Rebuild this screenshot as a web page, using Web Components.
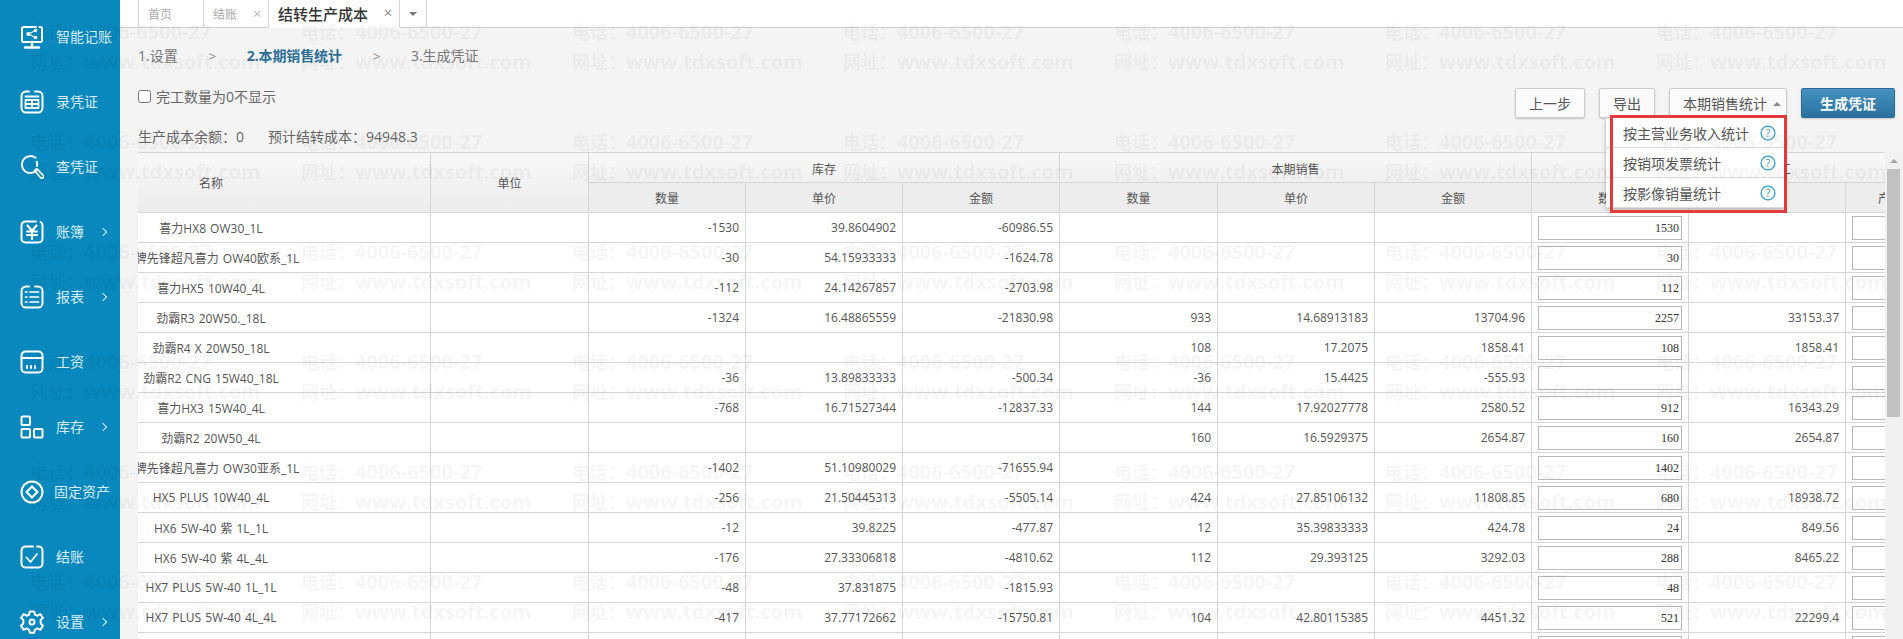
<!DOCTYPE html>
<html lang="zh-CN"><head><meta charset="utf-8"><title>结转生产成本</title>
<style>
html,body{margin:0;height:100%;overflow:hidden;background:#f4f4f4}
body{font-family:"Open Sans","Noto Sans CJK SC",sans-serif;color:#666;font-size:14px}
</style></head>
<body>
<app-shell>
  <app-sidebar slot="side">
    <nav-item icon="monitor">智能记账</nav-item>
    <nav-item icon="voucher">录凭证</nav-item>
    <nav-item icon="search">查凭证</nav-item>
    <nav-item icon="yen" arrow>账簿</nav-item>
    <nav-item icon="report" arrow>报表</nav-item>
    <nav-item icon="salary">工资</nav-item>
    <nav-item icon="stock" arrow>库存</nav-item>
    <nav-item icon="asset" tight>固定资产</nav-item>
    <nav-item icon="check">结账</nav-item>
    <nav-item icon="gear" arrow>设置</nav-item>
  </app-sidebar>
  <tab-bar>
    <tab-item first>首页</tab-item>
    <tab-item closable>结账</tab-item>
    <tab-item closable active>结转生产成本</tab-item>
    <tab-more></tab-more>
  </tab-bar>
  <step-nav>
    <step-item>1.设置</step-item><step-sep></step-sep>
    <step-item active>2.本期销售统计</step-item><step-sep></step-sep>
    <step-item>3.生成凭证</step-item>
  </step-nav>
  <tool-row>
    <filter-info></filter-info>
    <ui-btn slot="actions" style="width:70px">上一步</ui-btn>
    <ui-btn slot="actions" style="width:56px">导出</ui-btn>
    <stat-dropdown slot="actions"></stat-dropdown>
    <ui-btn slot="actions" primary style="width:94px">生成凭证</ui-btn>
  </tool-row>
  <table-pane>
    <data-table></data-table>
    <scroll-rail slot="rail"></scroll-rail>
  </table-pane>
</app-shell>
<water-mark></water-mark>
<script>
function def(name, css, html, init){
  customElements.define(name, class extends HTMLElement{
    constructor(){super();const s=this.attachShadow({mode:'open'});
      s.innerHTML='<style>'+css+'</style>'+(typeof html==='function'?html(this):html);}
    connectedCallback(){ if(init) init(this,this.shadowRoot); }
  });
}
const ICONS={
monitor:'<path d="M16 2H3.5A1.5 1.5 0 0 0 2 3.500V15.500A1.500 1.500 0 0 0 3.500 17H20.500A1.500 1.500 0 0 0 22 15.500V3.500A1.500 1.500 0 0 0 20.500 2H19.500"/><path d="M12 17V22M5 22.500H19" stroke-width="2.400"/><path d="M15.500 5.500L8.500 9L15.500 12.500" stroke-width="1.200"/><circle cx="8.300" cy="9" r="2" fill="#fff" stroke="none"/><circle cx="15.500" cy="5.500" r="1.800" fill="#fff" stroke="none"/><circle cx="15.500" cy="12.500" r="1.800" fill="#fff" stroke="none"/>',
voucher:'<path d="M9 1.500H6A4.500 4.500 0 0 0 1.500 6V18A4.500 4.500 0 0 0 6 22.500H18A4.500 4.500 0 0 0 22.500 18V6A4.500 4.500 0 0 0 18 1.500H15"/><path d="M5.500 6.500H18.500M5.500 10V18H18.500V10ZM5.500 14H18.500M12 10V18" stroke-width="1.800"/>',
search:'<path d="M15.500 2.800A8.500 8.500 0 1 0 16.500 15.500"/><path d="M16.800 6.800A8.500 8.500 0 0 1 17 11"/><path d="M14.500 15.500L17 13.800L23.300 20.500A1.800 1.800 0 0 1 20.800 23Z" stroke-width="1.700"/>',
yen:'<path d="M16 1.500H5.500A4 4 0 0 0 1.500 5.500V18.500A4 4 0 0 0 5.500 22.500H18.500A4 4 0 0 0 22.500 18.500V5.500A4 4 0 0 0 20.500 2"/><path d="M7.500 5.500L12 11L16.500 5.500M12 11V19M7 11.500H17M7 15H17" stroke-width="2.200"/>',
report:'<path d="M9 1.500H6A4.500 4.500 0 0 0 1.500 6V18A4.500 4.500 0 0 0 6 22.500H18A4.500 4.500 0 0 0 22.500 18V6A4.500 4.500 0 0 0 18 1.500H15"/><path d="M10 7H18.500M10 12H18.500M10 17H18.500" stroke-width="1.700"/><path d="M5.500 7H7M5.500 12H7M5.500 17H7" stroke-width="1.700"/>',
salary:'<path d="M1.500 8V18.500A4 4 0 0 0 5.500 22.500H18.500A4 4 0 0 0 22.500 18.500V8Z"/><path d="M1.500 8V5.500A4 4 0 0 1 5.500 1.500H18.500A4 4 0 0 1 22.500 5.500V8"/><path d="M7 16V18M11 16V18M15 16V18" stroke-width="2"/>',
stock:'<rect x="1.500" y="1.500" width="8.500" height="8.500" rx="1"/><rect x="1.500" y="14" width="8.500" height="8.500" rx="1"/><rect x="14" y="14" width="8.500" height="8.500" rx="1"/>',
asset:'<circle cx="12" cy="12" r="10.500"/><path d="M12 6.500L17.500 12L12 17.500L6.500 12Z" stroke-width="2.200"/>',
check:'<path d="M13 1.500H5.500A4 4 0 0 0 1.500 5.500V18.500A4 4 0 0 0 5.500 22.500H18.500A4 4 0 0 0 22.500 18.500V5.500A4 4 0 0 0 18.500 1.500H17"/><path d="M6.500 12.500L10.500 17L17 9" stroke-width="1.700"/>',
gear:'<path d="M9.800 1.500H14.200L15 4.700L17.600 5.700L20.300 4L23 7.800L20.600 10L20.700 13.500L23 15.800L20.400 19.800L17.400 18.400L15 19.600L14.200 22.800H9.800L9 19.600L6.600 18.400L3.600 19.800L1 15.800L3.300 13.500L3.400 10L1 7.800L3.700 4L6.400 5.700L9 4.700Z" stroke-linejoin="round"/><circle cx="12" cy="12" r="2.500"/>'
};
def('app-shell',':host{display:flex;height:639px;width:1903px}main{flex:1;min-width:0;display:flex;flex-direction:column;background:#f4f4f4}',
 '<slot name="side"></slot><main><slot></slot></main>');
def('app-sidebar',':host{display:block;width:120px;flex:none;background:#0888bd;box-sizing:border-box;padding-top:4px;overflow:hidden;height:639px}','<slot></slot>');
def('nav-item',`:host{display:flex;align-items:center;height:65px;box-sizing:border-box;padding-left:20px;color:#d6edf7;font-size:14px;position:relative}
 svg{width:24px;height:24px;flex:none;fill:none;stroke:#fff;stroke-width:2;stroke-linecap:round;stroke-linejoin:round}
 span{margin-left:12px;margin-top:-1px;white-space:nowrap} :host([tight]) span{margin-left:10px}
 i{position:absolute;left:100px;top:50%;width:5px;height:5px;margin-top:-3px;border:solid #d6edf7;border-width:1.500px 1.500px 0 0;transform:rotate(45deg)}`,
 h=>`<svg viewBox="0 0 24 24">${ICONS[h.getAttribute('icon')]}</svg><span><slot></slot></span>${h.hasAttribute('arrow')?'<i></i>':''}`);
def('tab-bar',':host{display:flex;height:28px;flex:none;box-sizing:border-box;background:#fff;border-bottom:1px solid #cfcfcf;padding-left:18px}','<slot></slot>');
def('tab-item',`:host{display:flex;align-items:center;justify-content:space-between;height:28px;box-sizing:border-box;border-right:1px solid #d4d4d4;border-bottom:1px solid #cfcfcf;padding:0 6px 0 9px;width:65px;color:#aaa;font-size:12px;background:#fff}
 :host([first]){width:66px;border-left:1px solid #d4d4d4}
 :host([active]){width:131px;color:#333;font-size:15px;font-weight:500;border-bottom-color:#fff}
 b{font-weight:400;font-size:15px;width:10px;text-align:center;color:#bbb;line-height:1} :host([active]) b{color:#888;margin-top:-3px}`,
 h=>`<span><slot></slot></span>${h.hasAttribute('closable')?'<b>×</b>':''}`);
def('tab-more',`:host{display:flex;align-items:center;justify-content:center;width:27px;height:28px;box-sizing:border-box;border-right:1px solid #d4d4d4;border-bottom:1px solid #cfcfcf}
 i{width:0;height:0;border:4px solid transparent;border-top-color:#777;border-bottom:0}`,'<i></i>');
def('step-nav',':host{display:flex;gap:31px;flex:none;height:60px;box-sizing:border-box;padding:18px 0 0 18px;line-height:20px}','<slot></slot>');
def('step-item',':host{display:block;color:#777;font-size:14px}:host([active]){color:#2c6f97;font-weight:700;letter-spacing:-.1px}','<slot></slot>');
def('step-sep',':host{display:block;color:#888;font-size:13px;width:7px}','<span>&gt;</span>');
def('tool-row',':host{display:flex;justify-content:space-between;flex:none;height:64px;padding:0 8px 0 18px;align-items:flex-start}.a{display:flex;gap:14px}','<div><slot></slot></div><div class="a"><slot name="actions"></slot></div>');
def('filter-info',`:host{display:block;color:#666;font-size:14px}
 label{display:flex;align-items:center;gap:5px;height:16px;white-space:nowrap}
 input{margin:0;width:13px;height:13px}
 p{margin:25px 0 0;display:flex;gap:24px;line-height:16px;white-space:nowrap}`,
 '<label><input type="checkbox">完工数量为0不显示</label><p><span>生产成本余额：0</span><span>预计结转成本：94948.3</span></p>');
def('ui-btn',`:host{display:flex;align-items:center;justify-content:center;height:30px;box-sizing:border-box;border:1px solid #ccc;border-radius:2px;background:#fbfbfb;box-shadow:0 1px 2px rgba(0,0,0,.2);color:#555;font-size:14px;white-space:nowrap}
 :host([primary]){background:linear-gradient(#4692c0,#2a709f);border-color:#2a6d9a;color:#fff;font-weight:700}`,'<slot></slot>');
def('stat-dropdown',`:host{display:block;position:relative;width:118px;height:30px}
 .b{display:flex;align-items:center;height:30px;box-sizing:border-box;border:1px solid #ccc;border-radius:2px;background:#fbfbfb;box-shadow:0 1px 2px rgba(0,0,0,.2);color:#555;font-size:14px;padding-left:13px;white-space:nowrap;position:relative}
 .b i{position:absolute;left:103px;top:13px;width:0;height:0;border:4px solid transparent;border-bottom-color:#888;border-top:0}
 .m{position:absolute;left:-63px;top:30px;width:179px;background:#fff;box-shadow:0 1px 4px rgba(0,0,0,.3);z-index:10}
 .m div{display:flex;align-items:center;justify-content:space-between;height:30px;box-sizing:border-box;border-bottom:1px solid #ddd;padding:1px 9px 0 17px;color:#555;font-size:14px;white-space:nowrap}
 svg{width:16px;height:16px;flex:none}
 .r{position:absolute;left:-59px;top:27px;width:177px;height:98px;box-sizing:border-box;border:3px solid #e23b3b;z-index:11;pointer-events:none}`,
 ()=>{const q='<svg viewBox="0 0 15 15"><circle cx="7.500" cy="7.500" r="6.500" fill="none" stroke="#2f9ccd" stroke-width="1.200"/><text x="7.500" y="11" text-anchor="middle" font-size="10" font-family="Open Sans" fill="#2f9ccd">?</text></svg>';
  return `<div class="b">本期销售统计<i></i></div><div class="m"><div><span>按主营业务收入统计</span>${q}</div><div><span>按销项发票统计</span>${q}</div><div><span>按影像销量统计</span>${q}</div></div><div class="r"></div>`});
def('table-pane',':host{display:flex;flex:1;min-height:0;padding-left:18px}.t{flex:1;min-width:0;overflow:hidden}','<div class="t"><slot></slot></div><slot name="rail"></slot>');
def('scroll-rail',`:host{display:block;width:18px;flex:none;background:#f1f1f1;box-sizing:border-box;padding:0 2px 0 2px}
 .u{height:17px;display:flex;align-items:center;justify-content:center}.u i{width:0;height:0;border:4px solid transparent;border-bottom-color:#a3a3a3;border-top:0}
 .th{height:248px;width:13px;background:#c1c1c1}`,'<div class="u"><i></i></div><div class="th"></div>');
const ROWS=[
['喜力HX8 OW30_1L','-1530','39.8604902','-60986.55','','','','1530',''],
['壳牌先锋超凡喜力 OW40欧系_1L','-30','54.15933333','-1624.78','','','','30',''],
['喜力HX5 10W40_4L','-112','24.14267857','-2703.98','','','','112',''],
['劲霸R3 20W50._18L','-1324','16.48865559','-21830.98','933','14.68913183','13704.96','2257','33153.37'],
['劲霸R4 X 20W50_18L','','','','108','17.2075','1858.41','108','1858.41'],
['劲霸R2 CNG 15W40_18L','-36','13.89833333','-500.34','-36','15.4425','-555.93','',''],
['喜力HX3 15W40_4L','-768','16.71527344','-12837.33','144','17.92027778','2580.52','912','16343.29'],
['劲霸R2 20W50_4L','','','','160','16.5929375','2654.87','160','2654.87'],
['壳牌先锋超凡喜力 OW30亚系_1L','-1402','51.10980029','-71655.94','','','','1402',''],
['HX5 PLUS 10W40_4L','-256','21.50445313','-5505.14','424','27.85106132','11808.85','680','18938.72'],
['HX6 5W-40 紫 1L_1L','-12','39.8225','-477.87','12','35.39833333','424.78','24','849.56'],
['HX6 5W-40 紫 4L_4L','-176','27.33306818','-4810.62','112','29.393125','3292.03','288','8465.22'],
['HX7 PLUS 5W-40 1L_1L','-48','37.831875','-1815.93','','','','48',''],
['HX7 PLUS 5W-40 4L_4L','-417','37.77172662','-15750.81','104','42.80115385','4451.32','521','22299.4'],
['','','','','','','','','']];
const W=[293,158,157,157,157,158,157,157,157,157,157];
def('data-table',`:host{display:block;font-size:12px;color:#555}
 table{border-collapse:separate;border-spacing:0;table-layout:fixed;width:${W.reduce((a,b)=>a+b)}px;border-top:1px solid #d5d5d5;background:#fff}
 th,td{box-sizing:border-box;height:30px;padding:0;border-right:1px solid #d5d5d5;border-bottom:1px solid #d5d5d5;font-weight:400;white-space:nowrap}
 th{text-align:center;background:#ededed;color:#555}
 th.g{background:linear-gradient(#f8f8f8,#ececec)} th.h{background:linear-gradient(#f8f8f8,#f0f0f0);padding-top:2px}
 td.n{text-align:right;padding-right:6px}
 .nm{width:146px;display:flex;justify-content:center;white-space:nowrap;word-spacing:1px}
 td.i{padding-left:6px}
 .box{width:144px;height:24px;box-sizing:border-box;border:1px solid #b8b8b8;background:#fff;font:12px/22px "Liberation Serif","Noto Sans CJK SC",serif;color:#333;text-align:right;padding-right:2px}
 th.p{text-align:left;padding-left:32px}`,
 ()=>{
  const cols=W.map(w=>`<col style="width:${w}px">`).join('');
  const body=ROWS.map(r=>`<tr><td><div class="nm"><span>${r[0]}</span></div></td><td></td>`+
   [1,2,3,4,5,6].map(i=>`<td class="n">${r[i]}</td>`).join('')+
   `<td class="i"><div class="box">${r[7]}</div></td><td class="n">${r[8]}</td><td class="i"><div class="box"></div></td></tr>`).join('');
  return `<table><colgroup>${cols}</colgroup><thead>
  <tr><th rowspan="2" class="g"><div class="nm"><span>名称</span></div></th><th rowspan="2" class="g">单位</th>
  <th colspan="3" class="h">库存</th><th colspan="3" class="h">本期销售</th><th colspan="3" class="h">本期完工</th></tr>
  <tr><th>数量</th><th>单价</th><th>金额</th><th>数量</th><th>单价</th><th>金额</th><th>数量</th><th>金额</th><th class="p">产量</th></tr>
  </thead><tbody>${body}</tbody></table>`});
def('water-mark',`:host{position:fixed;left:0;top:0;width:1903px;height:639px;overflow:hidden;pointer-events:none;z-index:100}
 .g{display:grid;grid-template-columns:repeat(7,271px);grid-auto-rows:110px;padding:17px 0 0 30px;color:rgba(0,0,0,.04);font:700 20px/30px "Open Sans","Noto Sans CJK SC",sans-serif;white-space:nowrap}
 em{font:700 18px "Noto Sans CJK SC",sans-serif}`,
 ()=>{let c='';for(let i=0;i<42;i++)c+='<div><div><em>电话：</em>4006-6500-27</div><div><em>网址：</em>www.tdxsoft.com</div></div>';return `<div class="g">${c}</div>`});
</script>
</body></html>
